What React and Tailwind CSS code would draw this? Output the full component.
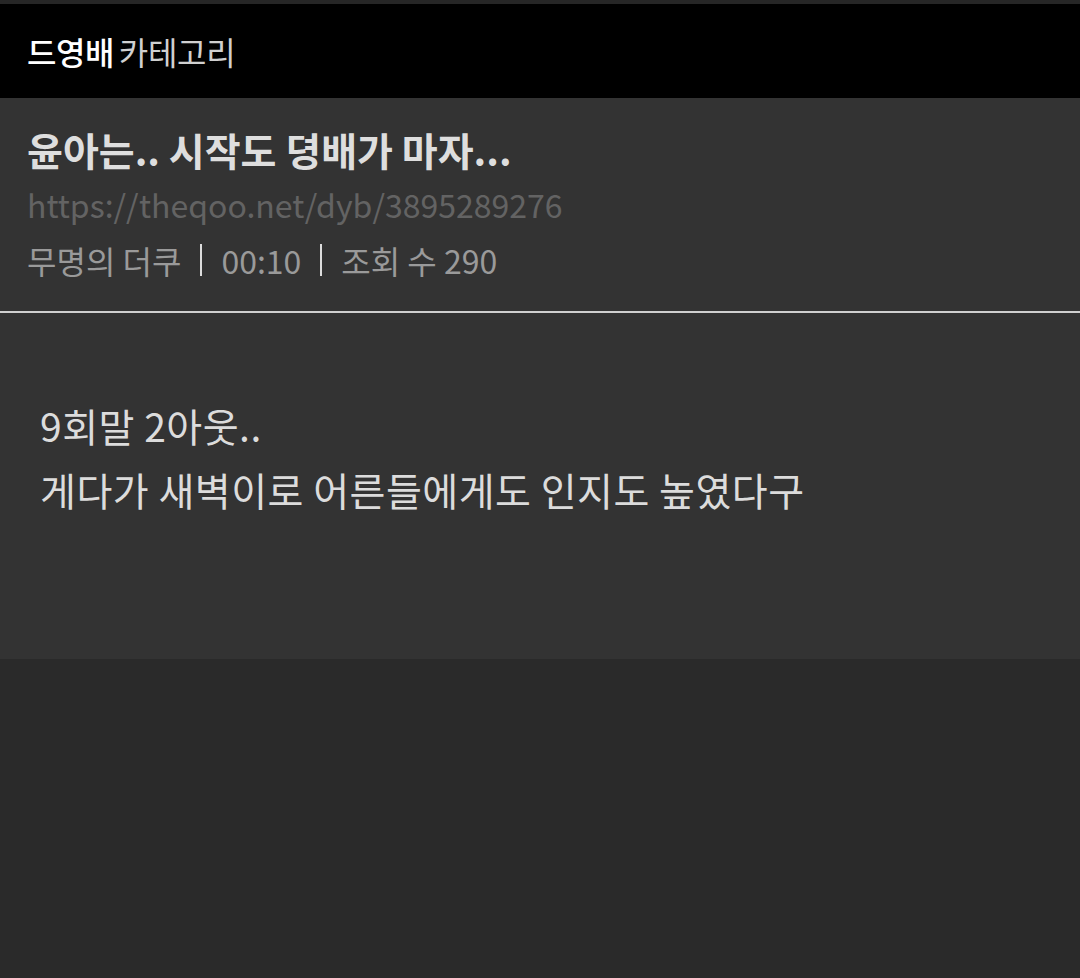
export default function App() {
  const font = { fontFamily: '"Noto Sans CJK KR", "Noto Sans", sans-serif' };
  return (
    <div className="w-[1080px] h-[978px] bg-[#2a2a2a] flex flex-col" style={font}>
      <div className="h-[4px] bg-[#262626]" />
      <div className="h-[94px] bg-black flex items-center pl-[27px]">
        <span className="text-[32px] leading-[40px] font-medium text-white tracking-[-0.5px]">드영배</span>
        <span className="text-[32px] leading-[40px] text-[#d0d0d0] ml-[5px] tracking-[-0.3px]">카테고리</span>
      </div>
      <div className="bg-[#333333] h-[561px] flex flex-col">
        <div className="h-[213px] flex flex-col pl-[27px] pt-[27px]">
          <div className="text-[39px] leading-[48px] font-bold text-[#dedede] whitespace-nowrap">윤아는.. 시작도 뎡배가 마자...</div>
          <div className="text-[32px] leading-[46px] text-[#636363] mt-[8px] whitespace-nowrap">https://theqoo.net/dyb/3895289276</div>
          <div className="text-[32px] leading-[46px] text-[#9a9a9a] mt-[10px] flex items-center whitespace-nowrap">
            <span>무명의 더쿠</span>
            <span className="inline-block w-[2px] h-[32px] bg-[#dddddd] mx-[19px]" />
            <span>00:10</span>
            <span className="inline-block w-[2px] h-[32px] bg-[#dddddd] mx-[19px]" />
            <span>조회 수 290</span>
          </div>
        </div>
        <div className="h-[2px] bg-[#d0d0d0]" />
        <div className="pl-[40px] pt-[80px] text-[39px] leading-[64px] text-[#dcdcdc] tracking-[0.5px] whitespace-nowrap">
          <div>9회말 2아웃..</div>
          <div>게다가 새벽이로 어른들에게도 인지도 높였다구</div>
        </div>
      </div>
    </div>
  );
}
